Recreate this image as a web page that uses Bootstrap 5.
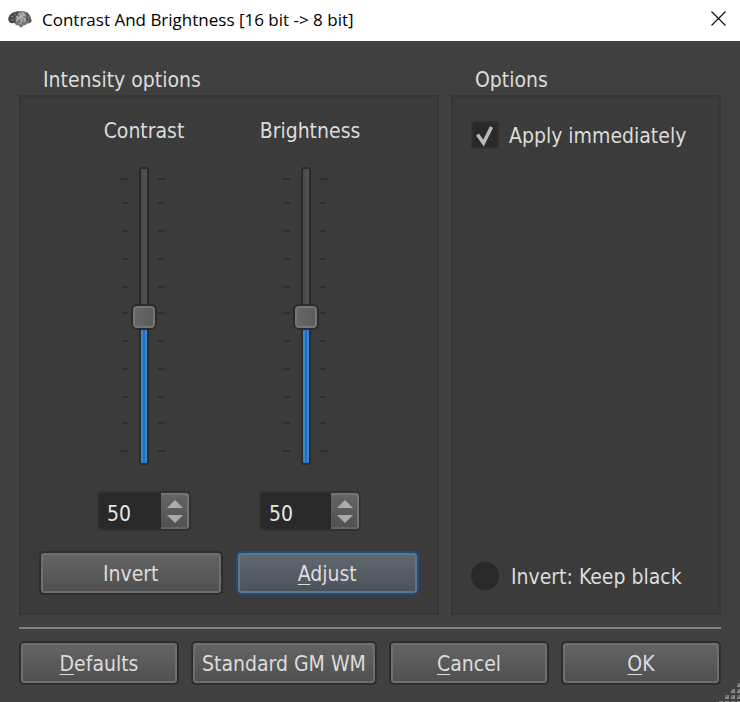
<!DOCTYPE html>
<html lang="en">
<head>
<meta charset="utf-8">
<meta name="viewport" content="width=device-width, initial-scale=1">
<title>Contrast And Brightness</title>
<link href="https://cdn.jsdelivr.net/npm/bootstrap@5.3.0/dist/css/bootstrap.min.css" rel="stylesheet">
<style>
  body { background: #404040; color: #dcdcdc; font: 21px/30px "DejaVu Sans Condensed", "DejaVu Sans", sans-serif; }
  .title-strip { height: 41px; padding: 0 14px 0 8px; font: 17px/24px "Open Sans", sans-serif; }
  .title-strip h1 { font: inherit; color: #000; margin: 0 0 2px 10px; }
  .dialog-body { padding: 20px 19px 17px; }
  .panes { display: grid; grid-template-columns: 420fr 270fr; gap: 12px; }
  .panes fieldset { display: flex; flex-direction: column; }
  .panes legend { font-size: 21px; line-height: 30px; padding: 4px 0 0 24px; margin: 0; float: none; }
  .pane { background: #3b3b3b; border: 2px solid #363636; padding: 18px; flex-grow: 1; }
  .channels { gap: 68px; }
  .channels label { padding-top: 1px; }
  .channel-a { width: 94px; }
  .channel-b { width: 102px; }
  .fader { display: grid; margin: 21px 0 26px 23px; width: 48px; }
  .fader > * { grid-area: 1 / 1; }
  .fader input { -webkit-appearance: none; appearance: none; writing-mode: vertical-lr; direction: rtl;
    width: 26px; height: 298px; margin: 0 0 0 11px; background: transparent; }
  .fader input::-webkit-slider-runnable-track { width: 10px; height: 298px; border: 2px solid #2b2b2b; border-radius: 3px;
    background: linear-gradient(90deg, #3787d0 2px, #246fbe 2px 4px, #3787d0 4px) bottom / 100% 50% no-repeat,
      linear-gradient(90deg, #484848, #525252); }
  .fader input::-webkit-slider-thumb { -webkit-appearance: none; width: 26px; height: 26px; margin-left: -10px; border: 2px solid #2b2b2b;
    border-radius: 6px; background: linear-gradient(90deg, #686868, #5a5a5a); box-shadow: inset 0 0 0 2px #757575; }
  .spin { height: 40px; border: 2px solid #313131; border-radius: 5px; background: #292929; overflow: hidden; }
  .spin input { min-width: 0; flex: 1 1 0; padding: 5px 0 0 8px; border: 0; background: none; color: #e6e6e6; appearance: textfield; -moz-appearance: textfield; line-height: 30px; }
  .spin input::-webkit-inner-spin-button { -webkit-appearance: none; margin: 0; }
  .steps { width: 28px; background: linear-gradient(#656565, #505050); border-radius: 0 3px 3px 0; box-shadow: inset -2px 2px #747474, inset 0 -2px #646464; }
  .steps button { flex: 1 1 0; padding: 0; border: 0; background: none; line-height: 0; display: flex; justify-content: center; }
  .steps button:first-child { align-items: flex-end; padding-bottom: 3px; }
  .steps button:last-child { padding-top: 4px; }
  .btn-dlg { --bs-btn-color: #dcdcdc; --bs-btn-hover-color: #fff; --bs-btn-font-size: 21px; --bs-btn-line-height: 30px;
    --bs-btn-padding-x: 0px; --bs-btn-border-width: 2px; --bs-btn-border-color: #2d2d2d; --bs-btn-hover-border-color: #184f85;
    --bs-btn-border-radius: 5px; --bs-btn-font-family: inherit; padding-top: 6px; padding-bottom: 4px; height: 44px; white-space: nowrap;
    background: linear-gradient(#656565, #4f4f4f) padding-box; box-shadow: inset 0 0 0 2px #6e6e6e; background-clip: padding-box; }
  .btn-focus { --bs-btn-border-color: #184f85; background: linear-gradient(#606870, #4b525a) padding-box; box-shadow: inset 0 0 0 2px #69737c; }
  u { text-underline-offset: 3px; text-decoration-thickness: 1px; }
  .pair { display: grid; grid-template-columns: 1fr 1fr; gap: 13px; margin-top: 20px; }
  .opt { min-height: 28px; gap: 10px; }
  .opt-first { margin-top: 6px; }
  .opt-last { gap: 12px; margin-bottom: 5px; }
  .opt input { appearance: none; -webkit-appearance: none; flex: none; width: 28px; height: 28px; margin: 0; background: #292929; }
  .opt [type=checkbox] { border: 2px solid #313131; border-radius: 2px; grid-area: 1 / 1; }
  .opt [type=radio] { border-radius: 50%; }
  .opt label { padding-top: 2px; line-height: 26px; }
  .tick-cell { display: grid; }
  .tick-cell svg { grid-area: 1 / 1; pointer-events: none; visibility: hidden; }
  .tick-cell input:checked + svg { visibility: visible; }
  .rule { height: 2px; margin: 12px 0; border: 0; background: #838383; opacity: 1; }
  .actions { display: grid; grid-template-columns: 160fr 186fr 160fr 160fr; gap: 12px; }
</style>
</head>
<body>
<div class="position-relative">
  <header class="title-strip bg-white d-flex align-items-center">
    <svg width="24" height="20" viewBox="0 0 24 20" aria-hidden="true">
      <path d="M.5 9C0 5 3 2 7 1c4-1.500 8-1.500 11 0 3 1 5 5 5.500 9-.5 2-2.500 2.500-4.500 2.500-1 1.500-2 2-4 2l-.5 1.500-2 .5-1.500-2c-3 0-4-1.500-4.500-2.500C4 12.500 1 12 .5 9z" fill="#777"/>
      <path d="M.5 9C0 5 3 2 7 1l4-.5-2 3.500-2 3 1 4-2 1C4 12.500 1 12 .5 9z" fill="#484848"/>
      <path d="M18 1c3 1 5 5 5.500 9-.5 2-2.500 2-4.500 2l-1-4 1-3z" fill="#5a5a5a"/>
      <path d="M11 2l2 2-2 3 3 2-2 4M16 2l-2 4 3 2-1 3M9 5l1 3-2 2M14 1l3 4M12 6l3 0" fill="none" stroke="#b4b4b4" stroke-width="1.500"/>
      <path d="M3 6l3-1M3 9l3 0M6 3l2 1M20 5l1 3M12 10l2 4M18 10l3 1" fill="none" stroke="#858585"/>
    </svg>
    <h1>Contrast And Brightness [16 bit -&gt; 8 bit]</h1>
    <button type="button" class="ms-auto border-0 bg-transparent p-0 pb-1 d-flex" aria-label="Close">
      <svg width="15" height="15" viewBox="0 0 15 15"><path d="M.5.5l14 14M14.500.5l-14 14" stroke="#111" stroke-width="1.200"/></svg>
    </button>
  </header>

  <main class="dialog-body">
    <div class="panes">
      <fieldset>
        <legend>Intensity options</legend>
        <div class="pane">
          <div class="channels d-flex justify-content-center">
            <div class="channel-a">
              <label for="contrast" class="d-block text-center text-nowrap">Contrast</label>
              <div class="fader">
                <svg width="48" height="298" viewBox="0 0 48 298" aria-hidden="true"><path d="M0 12h8M38 12h8M2 36h6M38 36h6M2 64h6M38 64h6M2 92h6M38 92h6M2 120h6M38 120h6M2 146h6M38 146h6M2 174h6M38 174h6M2 202h6M38 202h6M2 230h6M38 230h6M2 256h6M38 256h6M0 284h8M38 284h8" stroke="#2d2d2d" stroke-width="2"/></svg>
                <input type="range" id="contrast" min="1" max="100" value="50">
              </div>
              <div class="spin d-flex">
                <input type="number" value="50" aria-label="Contrast value">
                <div class="steps d-flex flex-column">
                  <button type="button" aria-label="Increase contrast"><svg width="16" height="8"><path d="M0 8L8 0l8 8z" fill="#ababab"/></svg></button>
                  <button type="button" aria-label="Decrease contrast"><svg width="16" height="8"><path d="M0 0l8 8 8-8z" fill="#ababab"/></svg></button>
                </div>
              </div>
            </div>
            <div class="channel-b">
              <label for="brightness" class="d-block text-center text-nowrap">Brightness</label>
              <div class="fader">
                <svg width="48" height="298" viewBox="0 0 48 298" aria-hidden="true"><path d="M0 12h8M38 12h8M2 36h6M38 36h6M2 64h6M38 64h6M2 92h6M38 92h6M2 120h6M38 120h6M2 146h6M38 146h6M2 174h6M38 174h6M2 202h6M38 202h6M2 230h6M38 230h6M2 256h6M38 256h6M0 284h8M38 284h8" stroke="#2d2d2d" stroke-width="2"/></svg>
                <input type="range" id="brightness" min="1" max="100" value="50">
              </div>
              <div class="spin d-flex">
                <input type="number" value="50" aria-label="Brightness value">
                <div class="steps d-flex flex-column">
                  <button type="button" aria-label="Increase brightness"><svg width="16" height="8"><path d="M0 8L8 0l8 8z" fill="#ababab"/></svg></button>
                  <button type="button" aria-label="Decrease brightness"><svg width="16" height="8"><path d="M0 0l8 8 8-8z" fill="#ababab"/></svg></button>
                </div>
              </div>
            </div>
          </div>
          <div class="pair">
            <button type="button" class="btn btn-dlg">Invert</button>
            <button type="button" class="btn btn-dlg btn-focus"><u>A</u>djust</button>
          </div>
        </div>
      </fieldset>

      <fieldset>
        <legend>Options</legend>
        <div class="pane d-flex flex-column justify-content-between">
          <div class="opt opt-first d-flex align-items-center">
            <div class="tick-cell">
              <input type="checkbox" id="apply" checked>
              <svg width="28" height="28" viewBox="0 0 28 28" aria-hidden="true"><path d="M6.500 13.500l6 8.500L20.500 6" fill="none" stroke="#bababa" stroke-width="3.500"/></svg>
            </div>
            <label for="apply">Apply immediately</label>
          </div>
          <div class="opt opt-last d-flex align-items-center">
            <input type="radio" id="keep" name="keep">
            <label for="keep">Invert: Keep black</label>
          </div>
        </div>
      </fieldset>
    </div>

    <hr class="rule">

    <div class="actions">
      <button type="button" class="btn btn-dlg"><u>D</u>efaults</button>
      <button type="button" class="btn btn-dlg">Standard GM WM</button>
      <button type="button" class="btn btn-dlg"><u>C</u>ancel</button>
      <button type="button" class="btn btn-dlg"><u>O</u>K</button>
    </div>
  </main>

  <svg class="position-absolute bottom-0 end-0" width="21" height="19" viewBox="0 0 21 19" aria-hidden="true">
    <path d="M18 0h4v4h-4zM12 6h4v4h-4zM18 6h4v4h-4zM6 12h4v4H6zM12 12h4v4h-4zM18 12h4v4h-4zM0 18h4v4H0zM6 18h4v4H6zM12 18h4v4h-4zM18 18h4v4h-4z" fill="#858585"/>
    <path d="M18 0h2v2h-2zM12 6h2v2h-2zM18 6h2v2h-2zM6 12h2v2H6zM12 12h2v2h-2zM18 12h2v2h-2z" fill="#5c5c5c"/>
  </svg>
</div>
<script src="https://cdn.jsdelivr.net/npm/bootstrap@5.3.0/dist/js/bootstrap.bundle.min.js"></script>
</body>
</html>
